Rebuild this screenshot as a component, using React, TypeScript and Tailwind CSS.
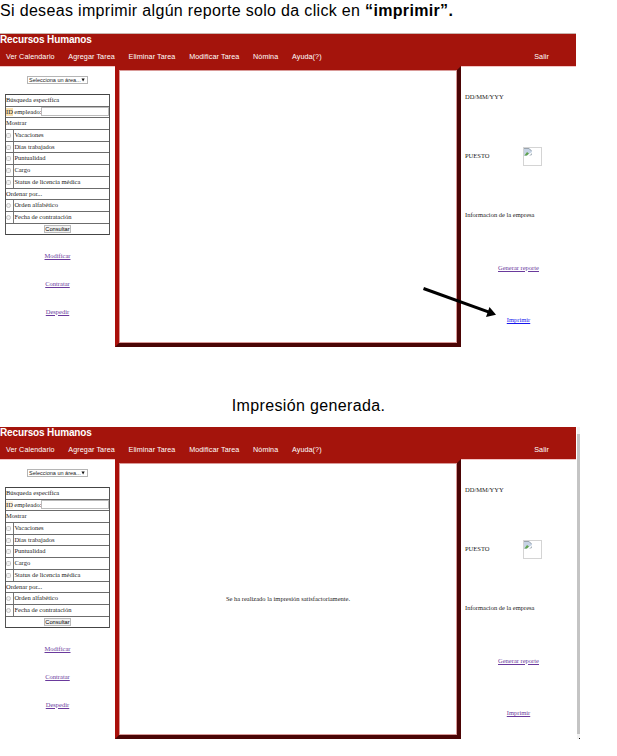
import React from "react";

const serif = "font-['Liberation_Serif',serif]";

const checks = ["Vacaciones", "Días trabajados", "Puntualidad", "Cargo", "Status de licencia médica"];
const orders = ["Orden alfabético", "Fecha de contratación"];

function Label({ children }: { children: React.ReactNode }) {
  return <div className="flex h-[11.7px] items-center whitespace-nowrap border-b border-[#6c6c6c] pb-[0.6px]">{children}</div>;
}

function Option({ text, round }: { text: string; round?: boolean }) {
  return (
    <div className="flex h-[11.7px] items-stretch border-b border-[#6c6c6c]">
      <div className="flex w-[8px] items-center border-r border-[#777]">
        <span className={`block h-[5px] w-[5px] border border-[#c4c4c4] bg-[#f1f1f1] ${round ? "rounded-full" : "rounded-[1.5px]"}`} />
      </div>
      <div className="flex items-center whitespace-nowrap pb-[0.6px] pl-[0.4px]">{text}</div>
    </div>
  );
}

function BrokenImage() {
  return (
    <div className="h-[19px] w-[19px] border border-[#d4d4d4]">
      <svg width="8" height="8" viewBox="0 0 8 8" className="block">
        <path d="M0 0H5L8 3V4L2 8H0Z" fill="#c6d3e4" />
        <path d="M0 0.5H5L7.5 3" fill="none" stroke="#9aa4ad" />
        <path d="M0.5 7.5L3 4L5 5.5L3 7.5Z" fill="#5fa34e" />
        <path d="M5 8L8 5V7Z" fill="#aab5bd" />
      </svg>
    </div>
  );
}

function Screen({ second, message }: { second?: boolean; message?: string }) {
  const link = "underline text-[#6a3a9c]";
  return (
    <div className="flex w-[580px]">
      <div className="w-[576px] shrink-0">
        <header
          className={`bg-[#a4140c] font-['Liberation_Sans',sans-serif] text-white ${second ? "h-[32px]" : "h-[33px] border-t border-[#c9b4ae]"}`}
        >
          <h1 className="h-[11px] whitespace-nowrap text-[10px] font-bold leading-[11px] tracking-[-0.14px]">Recursos Humanos</h1>
          <nav className="flex h-[21px] items-center justify-between whitespace-nowrap pl-[6px] pr-[27px] pt-[3px] text-[7.2px] tracking-[0.08px]">
            <div className="flex gap-[13.7px]">
              <span>Ver Calendario</span>
              <span>Agregar Tarea</span>
              <span>Eliminar Tarea</span>
              <span>Modificar Tarea</span>
              <span>Nómina</span>
              <span>Ayuda(?)</span>
            </div>
            <span>Salir</span>
          </nav>
        </header>
        <div className={`flex text-[6.5px] leading-[8px] text-[#222] ${second ? "h-[280px]" : "h-[281px]"} ${serif}`}>
          <aside className="flex w-[115px] flex-col items-center border-t border-[#f3c5c5]">
            <div className="mt-[9px] flex h-[8px] w-[61px] shrink-0 items-center justify-between border border-[#b5b5b5] pl-[1px] pr-[2px] font-['Liberation_Sans',sans-serif] text-[5.5px]">
              <span className="whitespace-nowrap">Selecciona un área...</span>
              <svg className="shrink-0" width="4" height="4" viewBox="0 0 4 4"><path d="M0.5 0.5H3.7L2.1 3.6Z" fill="#111" /></svg>
            </div>
            <div className="mt-[10px] w-[105px] shrink-0 border-x border-t border-x-[#555] border-t-[#444]">
              <Label>Búsqueda específica</Label>
              <Label>
                <span className={second ? "bg-[#fff3df]" : "bg-[#f8dfae]"}>ID</span>
                <span className="ml-[1.5px]">empleado:</span>
                <span className="block h-[9px] flex-1 border border-[#bbb]" />
              </Label>
              <Label>Mostrar</Label>
              {checks.map((t) => <Option key={t} text={t} />)}
              <Label>Ordenar por...</Label>
              {orders.map((t) => <Option key={t} text={t} round />)}
              <div className="flex h-[11.7px] items-center justify-center border-b border-[#444]">
                <span className="flex h-[8px] items-center border border-[#bbb] bg-[#f3f3f3] font-['Liberation_Sans',sans-serif] text-[5.7px] text-black">Consultar</span>
              </div>
            </div>
            <div className="mt-[7px] flex flex-col items-center">
              {["Modificar", "Contratar", "Despedir"].map((t) => (
                <div key={t} className="flex h-[28px] items-center pb-px"><a className={link}>{t}</a></div>
              ))}
            </div>
          </aside>
          <main className="flex w-[346px] items-center justify-center border-4 border-b-[#4b0505] border-l-[#a90f0a] border-r-[#4b0505] border-t-[#a4140c]">
            <div className="flex h-full w-full items-center justify-center border border-[#d99a98] text-[6.5px]">
              {message && <span className="whitespace-nowrap">{message}</span>}
            </div>
          </main>
          <aside className="w-[115px] border-t border-[#f3c5c5] pl-[4px]">
            <div className="flex h-[60px] items-center">DD/MM/YYY</div>
            <div className="flex h-[58px] items-center">
              <span className="w-[58px]">PUESTO</span>
              <BrokenImage />
            </div>
            <div className="flex h-[60px] items-center whitespace-nowrap">Informacion de la empresa</div>
            <div className="flex h-[46px] items-center justify-center pb-px pr-[4px]"><a className={link}>Generar reporte</a></div>
            <div className="flex h-[58px] items-center justify-center pr-[4px]">
              <a className={second ? link : "text-[#1717ee] underline"}>Imprimir</a>
            </div>
          </aside>
        </div>
      </div>
      {second && (
        <div className="ml-px flex w-[3px] flex-col bg-[#f3f3f3]">
          <div className="mt-[7px] h-[300px] bg-[#c4c4c4]" />
          <div className="ml-[2px] mt-[4px] h-px w-px bg-black" />
        </div>
      )}
    </div>
  );
}

export default function App() {
  return (
    <div className="relative h-[756px] w-[617px] overflow-hidden bg-white font-['Liberation_Sans',sans-serif] text-black">
      <p className="h-[33px] whitespace-nowrap text-[16px] leading-[21px] tracking-[0.33px]">
        Si deseas imprimir algún reporte solo da click en <strong>“imprimir”.</strong>
      </p>
      <Screen />
      <p className="h-[80px] whitespace-nowrap pt-[48px] text-center text-[16px] leading-[21px] tracking-[0.35px]">Impresión generada.</p>
      <Screen second message="Se ha realizado la impresión satisfactoriamente." />
      <svg className="absolute left-[420px] top-[284px]" width="80" height="36" viewBox="0 0 80 36">
        <path d="M3.5 4.5L69 28.2" stroke="#000" strokeWidth="3" />
        <path d="M69.5 23L76 30.7L66 33Z" fill="#000" />
      </svg>
    </div>
  );
}
